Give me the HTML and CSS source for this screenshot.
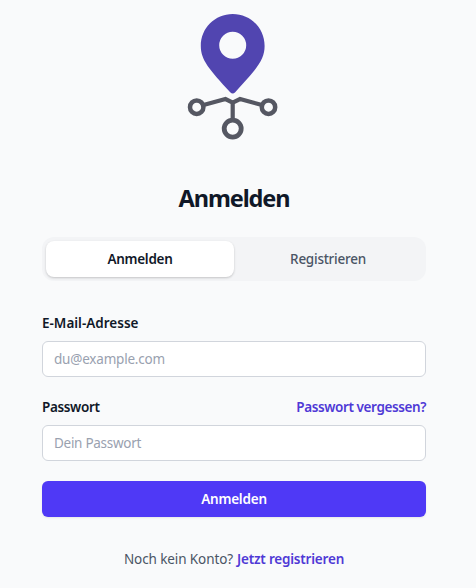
FILE: index.html
```html
<!DOCTYPE html>
<html lang="de">
<head>
<meta charset="utf-8">
<title>Anmelden</title>
<link rel="stylesheet" href="styles.css">
</head>
<body>
<main class="auth">
  <svg class="logo" viewBox="0 0 96 132" width="96" height="132" aria-hidden="true">
    <path fill="#5145b0" fill-rule="evenodd" d="M46.700 4C29 4 14.800 18 14.800 36C14.800 50 23 59 44.2 82.2Q46.700 85 49.200 82.200C70.500 59 78.600 50 78.600 36C78.600 18 64.500 4 46.700 4ZM46.700 21.700a13.500 13.500 0 1 1 0 27a13.500 13.500 0 1 1 0-27Z"/>
    <g fill="none" stroke="#555762" stroke-width="4.200">
      <path d="M17.500 95L39.500 89L46.700 92.600L54 89L76 95M46.700 91V110"/>
      <circle cx="10.700" cy="97.200" r="6.700" stroke-width="4.500"/>
      <circle cx="82.500" cy="97.200" r="6.700" stroke-width="4.500"/>
      <circle cx="46.700" cy="118.600" r="8.500" stroke-width="4.800"/>
    </g>
  </svg>
  <h1 class="title">Anmelden</h1>
  <div class="tabs">
    <button class="tab tab-active" type="button">Anmelden</button>
    <button class="tab" type="button">Registrieren</button>
  </div>
  <form class="form">
    <div class="row"><label class="label email-label" for="email">E-Mail-Adresse</label></div>
    <input class="input email" id="email" type="email" placeholder="du@example.com">
    <div class="row"><label class="label" for="password">Passwort</label><a class="link forgot">Passwort vergessen?</a></div>
    <input class="input password" id="password" type="password" placeholder="Dein Passwort">
    <button class="submit" type="button">Anmelden</button>
  </form>
  <p class="footer"><span class="question">Noch kein Konto?</span><a class="link signup">Jetzt registrieren</a></p>
</main>
</body>
</html>
```
FILE: styles.css
```css
* { box-sizing: border-box; }
body {
  margin: 0;
  background: #f9fafb;
  color: #101828;
  font: 13.5px/20px "Noto Sans", "Open Sans", sans-serif;
  overflow: hidden;
}
button, input { font: inherit; margin: 0; }
.auth { width: 384px; margin: 10px 0 0 42px; }
.logo { display: block; margin: 0 auto 0 144px; }
.title {
  margin: 40px 0 23px;
  font-size: 23.5px;
  line-height: 32px;
  font-weight: 700;
  letter-spacing: -1.1px;
  text-align: center;
}
.tabs {
  display: flex;
  height: 44px;
  padding: 4px;
  border-radius: 12px;
  background: #f3f4f6;
}
.tab {
  flex: 1;
  height: 36px;
  padding: 0;
  border: 0;
  border-radius: 8px;
  background: transparent;
  color: #4a5565;
  font-weight: 500;
  letter-spacing: -0.25px;
}
.tab-active {
  background: #fff;
  color: #101828;
  font-weight: 600;
  letter-spacing: -0.3px;
  box-shadow: 0 1px 3px rgb(0 0 0 / 10%), 0 1px 2px rgb(0 0 0 / 10%);
}
.form { padding-top: 32px; }
.row { display: flex; justify-content: space-between; margin-bottom: 8px; }
.label { font-weight: 600; letter-spacing: -0.35px; }
.email-label { letter-spacing: 0; }
.link { color: #4f39d6; font-weight: 600; }
.forgot { letter-spacing: -0.4px; }
.signup { letter-spacing: -0.2px; }
.question { letter-spacing: -0.1px; }
.input {
  display: block;
  width: 100%;
  height: 36px;
  margin-bottom: 20px;
  padding: 0 11px;
  border: 1px solid #d1d5dc;
  border-radius: 6px;
  background: #fff;
  letter-spacing: -0.2px;
}
.password { letter-spacing: -0.28px; }
.input::placeholder { color: #99a1af; opacity: 1; }
.submit {
  display: block;
  width: 100%;
  height: 36px;
  padding: 0;
  border: 0;
  border-radius: 6px;
  background: #4f39f6;
  color: #fff;
  font-weight: 600;
  letter-spacing: -0.2px;
  box-shadow: 0 1px 2px rgb(0 0 0 / 8%);
}
.footer {
  display: flex;
  justify-content: center;
  gap: 4px;
  margin: 32px 0 0;
  color: #4a5565;
}
```
